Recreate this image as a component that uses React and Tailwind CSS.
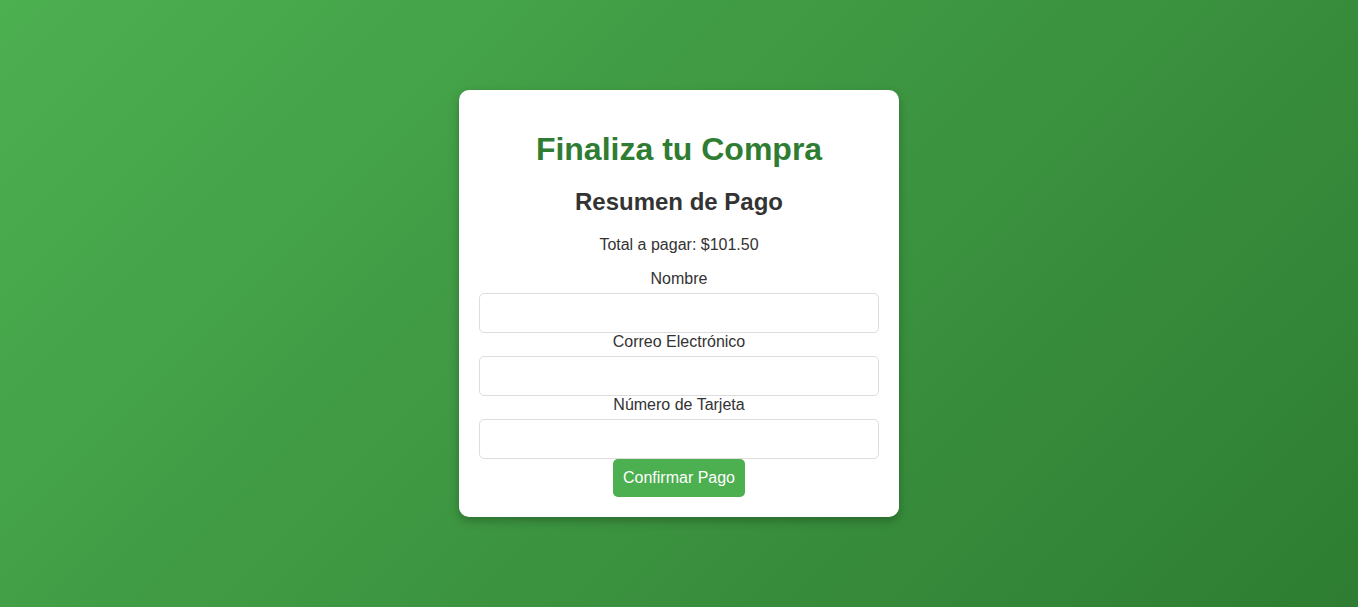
import React, { useState } from 'react';

const App = () => {
  const [nombre, setNombre] = useState('');
  const [correo, setCorreo] = useState('');
  const [tarjeta, setTarjeta] = useState('');

  const handleSubmit = (e) => {
    e.preventDefault();
  };

  return (
    <div className="min-h-screen h-[607px] flex items-center justify-center bg-[linear-gradient(135deg,#4caf50,#2e7d32)] font-['Liberation_Sans',Arial,sans-serif] text-[#333] leading-[normal]">
      <div className="w-[440px] bg-white rounded-[10px] p-5 text-center shadow-[0_4px_10px_rgba(0,0,0,0.25)]">
        <h1 className="text-[32px] font-bold leading-[normal] text-[#2e7d32] mt-[21.44px] mb-5">Finaliza tu Compra</h1>
        <h2 className="text-2xl font-bold leading-[normal] mb-[19.92px]">Resumen de Pago</h2>
        <p className="text-base leading-[normal] mb-4">Total a pagar: $101.50</p>

        <form onSubmit={handleSubmit}>
          <label className="block leading-[normal] mb-[5px]">Nombre</label>
          <input
            type="text"
            value={nombre}
            onChange={(e) => setNombre(e.target.value)}
            className="block w-full h-10 px-2.5 border border-[#ddd] rounded-[5px] outline-none"
          />

          <label className="block leading-[normal] mb-[5px]">Correo Electrónico</label>
          <input
            type="email"
            value={correo}
            onChange={(e) => setCorreo(e.target.value)}
            className="block w-full h-10 px-2.5 border border-[#ddd] rounded-[5px] outline-none"
          />

          <label className="block leading-[normal] mb-[5px]">Número de Tarjeta</label>
          <input
            type="text"
            value={tarjeta}
            onChange={(e) => setTarjeta(e.target.value)}
            className="block w-full h-10 px-2.5 border border-[#ddd] rounded-[5px] outline-none"
          />

          <button
            type="submit"
            className="bg-[#4caf50] text-white rounded-[5px] py-2.5 px-2.5 text-base leading-[normal] cursor-pointer"
          >
            Confirmar Pago
          </button>
        </form>
      </div>
    </div>
  );
};

export default App;
